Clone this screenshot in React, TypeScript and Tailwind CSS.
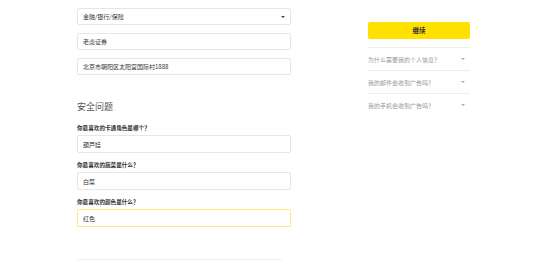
const font = {
  fontFamily: '"Noto Sans CJK SC", "Noto Sans", "Liberation Sans", sans-serif',
};

function Caret({ color = "border-t-[#666]" }: { color?: string }) {
  return (
    <span
      className={`inline-block h-0 w-0 border-x-[2px] border-t-[2.5px] border-x-transparent ${color}`}
    />
  );
}

function Field({ value, active }: { value: string; active?: boolean }) {
  return (
    <div
      className={
        "flex h-[18px] items-center rounded-[2px] border bg-white px-[5px] text-[6px] text-[#333] " +
        (active ? "border-[#fdeb84]" : "border-[#e6e6e6]")
      }
    >
      {value}
    </div>
  );
}

const questions = [
  { label: "你最喜欢的卡通角色是哪个？", value: "葫芦娃" },
  { label: "你最喜欢的蔬菜是什么？", value: "白菜" },
  { label: "你最喜欢的颜色是什么？", value: "红色", active: true },
];

const faqs = ["为什么需要我的个人信息？", "我的邮件会收到广告吗？", "我的手机会收到广告吗？"];

export default function App() {
  return (
    <div className="flex h-[265px] w-[550px] overflow-hidden bg-white" style={font}>
      <div className="ml-[77px] flex w-[214px] flex-col pt-[8px]">
        <div className="flex h-[17px] items-center justify-between rounded-[2px] border border-[#e6e6e6] px-[5px] text-[6px] text-[#333]">
          <span>金融/银行/保险</span>
          <Caret color="border-t-[#444]" />
        </div>
        <div className="mt-[8px] flex h-[17px] items-center rounded-[2px] border border-[#e6e6e6] px-[5px] text-[6px] text-[#333]">
          老虎证券
        </div>
        <div className="mt-[8px] flex h-[17px] items-center rounded-[2px] border border-[#e6e6e6] px-[5px] text-[6px] text-[#333]">
          北京市朝阳区太阳宫国际村1888
        </div>

        <h2 className="mt-[26px] text-[9px] leading-[12px] font-normal text-[#555]">安全问题</h2>

        {questions.map((q, i) => (
          <div key={q.label} className={i === 0 ? "mt-[11px]" : "mt-[8px]"}>
            <p className="text-[5.6px] leading-[8px] font-bold text-[#333]">{q.label}</p>
            <div className="mt-[3px]">
              <Field value={q.value} active={q.active} />
            </div>
          </div>
        ))}

        <div className="mt-[32px] h-px w-[205px] bg-[#f0f0f0]" />
      </div>

      <div className="ml-[77px] flex w-[102px] flex-col pt-[22px]">
        <button
          type="button"
          className="flex h-[17px] items-center justify-center rounded-[2px] bg-[#ffe100] text-[6.5px] font-bold text-[#333]"
        >
          继续
        </button>
        <div className="mt-[8px]">
          {faqs.map((f) => (
            <div
              key={f}
              className="flex h-[23px] items-center justify-between border-t border-[#eeeeee] pr-[5px] text-[6px] text-[#9a9a9a]"
            >
              <span>{f}</span>
              <Caret color="border-t-[#aaa]" />
            </div>
          ))}
        </div>
      </div>
    </div>
  );
}
